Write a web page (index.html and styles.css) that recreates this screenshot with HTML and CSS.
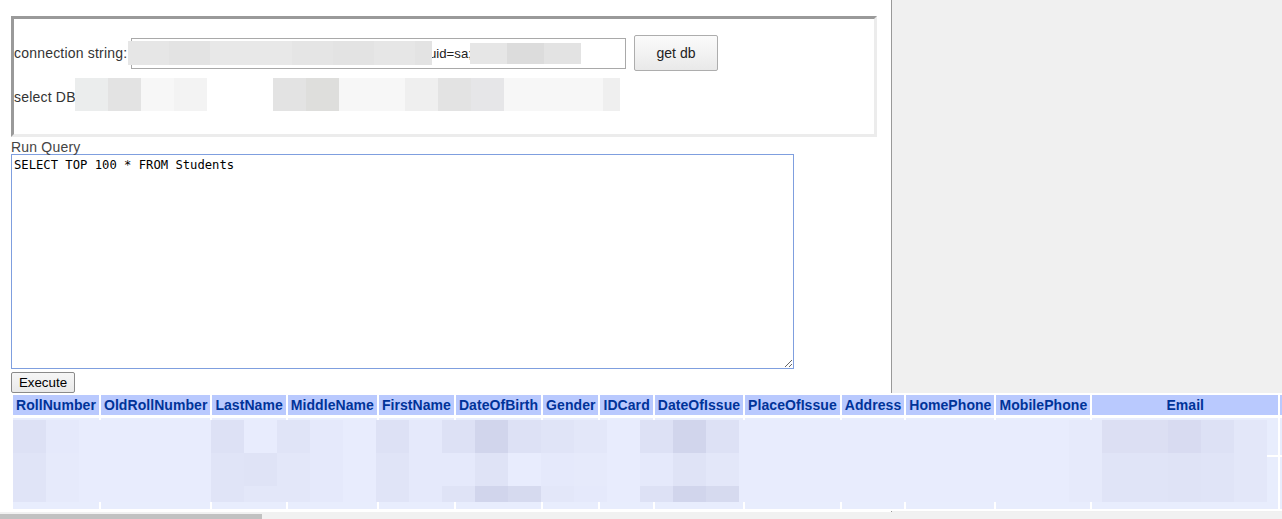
FILE: index.html
```html
<!DOCTYPE html>
<html>
<head>
<meta charset="utf-8">
<title>Run Query</title>
<link rel="stylesheet" href="styles.css">
</head>
<body>
<div class="page">
  <div class="conn-box">
    <div class="row row-conn">
      <span class="label label-conn">connection string:</span>
      <div class="fake-input">
        <span class="blur g1"><i class="s1"></i><i class="s2"></i><i class="s3"></i><i class="s3"></i><i class="s4"></i><i class="s2"></i><i class="s1"></i><i class="s2 half"></i></span>
        <span class="uid">uid=sa;</span>
        <span class="blur g2"><i class="s1"></i><i class="s5"></i><i class="s2"></i></span>
      </div>
      <button class="btn-getdb">get db</button>
    </div>
    <div class="row row-db">
      <span class="label label-db">select DB</span>
      <div class="strip">
        <i class="t1"></i><i class="t2"></i><i class="t3"></i><i class="t4"></i><i class="t0"></i><i class="t0"></i><i class="t2"></i><i class="t5"></i><i class="t3"></i><i class="t3"></i><i class="t6"></i><i class="t2"></i><i class="t7"></i><i class="t3"></i><i class="t3"></i><i class="t3"></i><i class="t6 short"></i>
      </div>
    </div>
  </div>
  <div class="run-label">Run Query</div>
  <textarea class="query" spellcheck="false">SELECT TOP 100 * FROM Students</textarea>
  <button class="btn-exec">Execute</button>
  <div class="results">
    <table class="grid">
      <thead>
        <tr>
          <th>RollNumber</th><th>OldRollNumber</th><th>LastName</th><th>MiddleName</th><th>FirstName</th><th>DateOfBirth</th><th>Gender</th><th>IDCard</th><th>DateOfIssue</th><th>PlaceOfIssue</th><th>Address</th><th>HomePhone</th><th>MobilePhone</th><th class="col-email">Email</th><th class="col-more"></th>
        </tr>
      </thead>
      <tbody>
        <tr class="r1"><td></td><td></td><td></td><td></td><td></td><td></td><td></td><td></td><td></td><td></td><td></td><td></td><td></td><td></td><td></td></tr>
        <tr class="r2"><td></td><td></td><td></td><td></td><td></td><td></td><td></td><td></td><td></td><td></td><td></td><td></td><td></td><td></td><td></td></tr>
      </tbody>
    </table>
    <div class="mosaic">
      <i class="e"></i><i class="b"></i><i></i><i></i><i></i><i></i><i class="e"></i><i></i><i class="d"></i><i class="b"></i><i></i><i class="e"></i><i class="b"></i><i class="e"></i><i class="f"></i><i class="e"></i><i class="d"></i><i class="c"></i><i></i><i class="e"></i><i class="f"></i><i class="e"></i><i></i><i></i><i></i><i></i><i></i><i></i><i></i><i></i><i></i><i></i><i class="j"></i><i class="h"></i><i class="h"></i><i class="i"></i><i class="e"></i><i class="c"></i>
      <i class="d"></i><i class="j"></i><i></i><i></i><i></i><i></i><i class="d"></i><i class="k"></i><i class="c"></i><i class="b"></i><i></i><i class="d"></i><i class="b"></i><i class="b"></i><i class="k"></i><i></i><i class="b"></i><i class="j"></i><i></i><i class="b"></i><i class="k"></i><i class="c"></i><i></i><i></i><i></i><i></i><i></i><i></i><i></i><i></i><i></i><i></i><i class="j"></i><i class="d"></i><i class="d"></i><i class="k"></i><i class="d"></i><i class="c"></i>
      <i class="d"></i><i class="j"></i><i></i><i></i><i></i><i></i><i class="d"></i><i class="c"></i><i class="c"></i><i class="b"></i><i></i><i class="d"></i><i class="b"></i><i class="k"></i><i class="f"></i><i class="g"></i><i class="c"></i><i class="b"></i><i></i><i class="e"></i><i class="f"></i><i class="g"></i><i></i><i></i><i></i><i></i><i></i><i></i><i></i><i></i><i></i><i></i><i class="j"></i><i class="d"></i><i class="d"></i><i class="k"></i><i class="d"></i><i class="c"></i>
    </div>
  </div>
</div>
<div class="hscroll"><div class="thumb"></div></div>
</body>
</html>
```

FILE: styles.css
```css
html, body {
  margin: 0;
  padding: 0;
}
body {
  background: #f0f0f0;
  overflow: hidden;
  font-family: "Liberation Sans", Arial, sans-serif;
  font-size: 14px;
  color: #333;
  width: 1282px;
  height: 519px;
}
.page {
  box-sizing: border-box;
  width: 892px;
  height: 513px;
  padding: 16px 0 0 11px;
  background: #fff;
  border-right: 1px solid #999;
}
.conn-box {
  box-sizing: border-box;
  width: 866px;
  height: 121px;
  border: 3px solid;
  border-color: #9a9a9a #ececec #ececec #9a9a9a;
  padding: 16px 0 0 0;
}
.row {
  display: flex;
}
.row-conn {
  height: 36px;
  align-items: center;
}
.label {
  display: block;
  line-height: 17px;
  white-space: nowrap;
  letter-spacing: 0.2px;
}
.label-conn {
  width: 117px;
}
.fake-input {
  box-sizing: border-box;
  width: 495px;
  height: 31px;
  border: 1px solid #a9a9a9;
  background: #fff;
  display: flex;
  align-items: flex-start;
  overflow: visible;
}
.blur {
  display: flex;
  flex: none;
}
.blur i {
  display: block;
}
.g1 {
  margin: 2px 0 0 -4px;
  position: relative;
}
.g1 i {
  width: 41px;
  height: 24px;
}
.g1 i.half {
  width: 17px;
}
.g2 {
  margin-top: 4px;
  position: relative;
}
.g2 i {
  width: 37px;
  height: 21px;
}
.s1 { background: #e6e6e6; }
.s2 { background: #e3e3e3; }
.s3 { background: #e8e8e8; }
.s4 { background: #e5e5e5; }
.s5 { background: #dcdcdc; }
.uid {
  display: block;
  flex: none;
  width: 41px;
  margin-left: -3px;
  font-size: 13.2px;
  line-height: 29px;
  white-space: nowrap;
  color: #222;
  overflow: visible;
}
.btn-getdb {
  box-sizing: border-box;
  margin: 0 0 0 8px;
  width: 84px;
  height: 36px;
  padding: 0;
  border: 1px solid #adadad;
  border-radius: 2px;
  background: linear-gradient(#fbfbfb, #e9e9e9);
  font-family: "Liberation Sans", Arial, sans-serif;
  font-size: 14px;
  color: #222;
}
.row-db {
  margin-top: 7px;
  height: 33px;
  align-items: flex-start;
}
.label-db {
  width: 61px;
  margin-top: 11px;
}
.strip {
  display: flex;
}
.strip i {
  display: block;
  width: 33px;
  height: 33px;
}
.strip i.short {
  width: 17px;
}
.t0 { background: #fff; }
.t1 { background: #ebeded; }
.t2 { background: #e3e3e3; }
.t3 { background: #f7f7f7; }
.t4 { background: #f3f3f3; }
.t5 { background: #dededc; }
.t6 { background: #efefef; }
.t7 { background: #e6e6e8; }
.run-label {
  height: 17px;
  line-height: 20px;
  color: #444;
  letter-spacing: 0.2px;
}
.query {
  display: block;
  box-sizing: border-box;
  width: 783px;
  height: 215px;
  margin: 0;
  padding: 3px 2px 2px;
  border: 1px solid #7f9fdf;
  outline: none;
  resize: both;
  font-family: "DejaVu Sans Mono", "Liberation Mono", monospace;
  font-size: 12.2px;
  line-height: 14px;
  color: #000;
  background: #fff;
}
.btn-exec {
  display: block;
  box-sizing: border-box;
  margin: 3px 0 0 0;
  width: 64px;
  height: 21px;
  padding: 0;
  border: 1px solid #8a8a8a;
  border-radius: 2px;
  background: linear-gradient(#f6f6f6, #e9e9e9);
  font-family: "Liberation Sans", Arial, sans-serif;
  font-size: 13.333px;
  color: #000;
}
.results {
  position: relative;
  width: 1271px;
  overflow: hidden;
}
.grid {
  width: max-content;
  border-spacing: 2px;
  border-collapse: separate;
  background: #fff;
}
.grid th {
  background: #b9c9fe;
  color: #039;
  font-weight: bold;
  font-size: 14px;
  line-height: 16px;
  letter-spacing: 0.06px;
  padding: 2px 3px;
  border-bottom: 1px solid #fff;
  white-space: nowrap;
  text-align: left;
}
.grid th.col-email {
  width: 180px;
  text-align: center;
}
.grid th.col-more {
  width: 100px;
}
.grid td {
  background: #e8edfd;
  padding: 0;
}
.grid tr.r1 td {
  height: 37px;
}
.grid tr.r2 td {
  height: 52px;
}
.mosaic {
  position: absolute;
  left: 2px;
  top: 27px;
  display: grid;
  grid-template-columns: repeat(38, 33px);
  grid-template-rows: 33px 33px 16px;
  background: #e8ecfd;
}
.mosaic i {
  display: block;
  background: #e8ecfd;
}
.mosaic i.b { background: #e5e9fb; }
.mosaic i.c { background: #e3e7f9; }
.mosaic i.d { background: #e0e4f7; }
.mosaic i.e { background: #dde1f5; }
.mosaic i.f { background: #d1d5ec; }
.mosaic i.g { background: #d6daef; }
.mosaic i.h { background: #dcdff3; }
.mosaic i.i { background: #d8dbf1; }
.mosaic i.j { background: #e6eafb; }
.mosaic i.k { background: #dfe3f6; }
.hscroll {
  position: fixed;
  left: 0;
  right: 0;
  bottom: 0;
  height: 7px;
  background: #f1f1f1;
}
.thumb {
  margin-top: 2px;
  width: 262px;
  height: 5px;
  background: #c1c1c1;
}
```
